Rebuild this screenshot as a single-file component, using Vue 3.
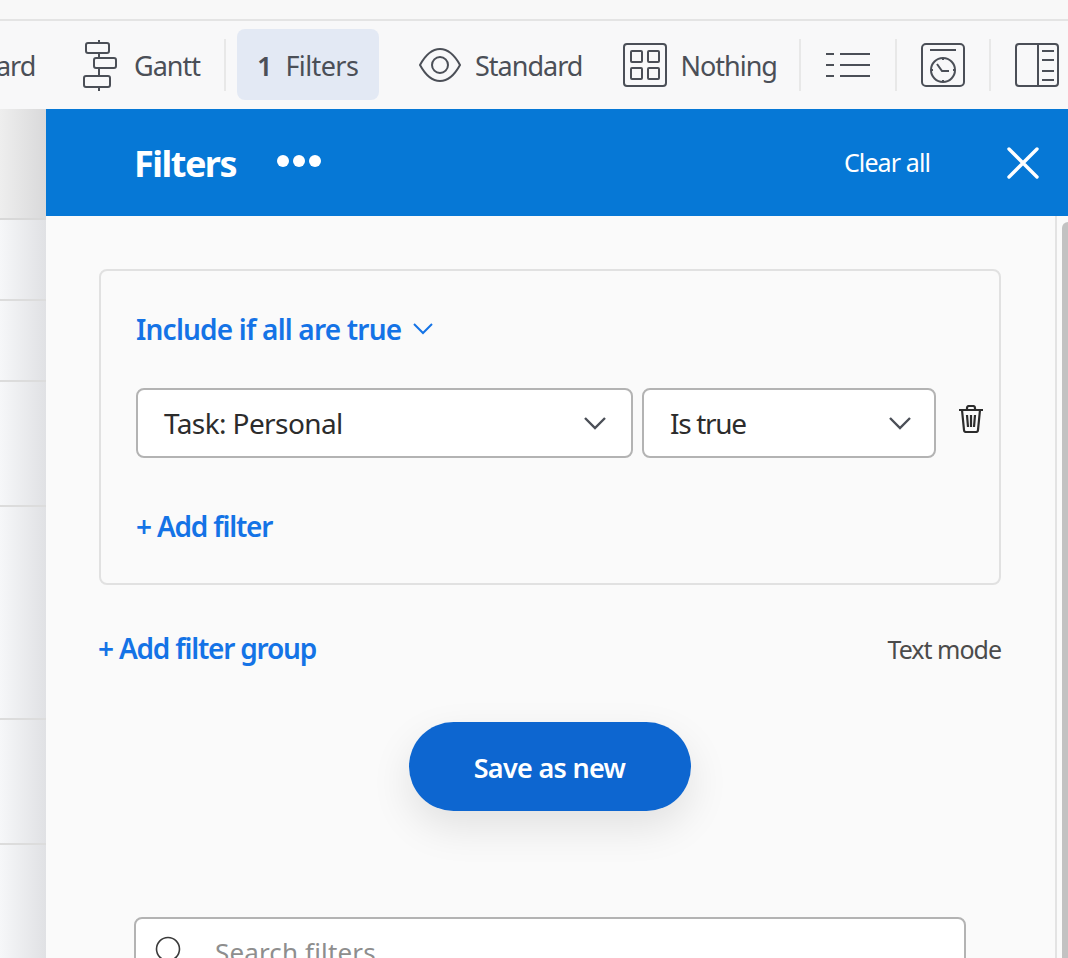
<template>
  <div class="page">
    <div class="top-strip"></div>
    <div class="toolbar">
      <span class="tool-text board">Board</span>
      <div class="tool gantt">
        <svg width="34" height="52" viewBox="0 0 34 52" fill="none" stroke="#4b4f57" stroke-width="2">
          <path d="M16 1v3M16 14v5M16 29v8M16 48v4" />
          <rect x="3" y="4" width="23" height="10" rx="2" />
          <rect x="11" y="19" width="22" height="10" rx="2" />
          <rect x="1" y="37" width="26" height="11" rx="2" />
        </svg>
        <span class="tool-text gantt-label">Gantt</span>
      </div>
      <i class="sep first-sep"></i>
      <div class="tool filters-tool">
        <b>1</b>
        <span class="tool-text filters-label">Filters</span>
      </div>
      <div class="tool standard">
        <svg width="42" height="34" viewBox="0 0 42 34" fill="none" stroke="#4b4f57" stroke-width="2">
          <path d="M1 17C7 6 14 1 21 1s14 5 20 16c-6 11-13 16-20 16S7 28 1 17z" />
          <circle cx="21" cy="17" r="8" />
        </svg>
        <span class="tool-text">Standard</span>
      </div>
      <div class="tool nothing">
        <svg width="44" height="44" viewBox="0 0 44 44" fill="none" stroke="#4b4f57" stroke-width="2">
          <rect x="1" y="1" width="42" height="42" rx="3" />
          <rect x="8" y="8" width="11" height="11" rx="1" />
          <rect x="25" y="8" width="11" height="11" rx="1" />
          <rect x="8" y="25" width="11" height="11" rx="1" />
          <rect x="25" y="25" width="11" height="11" rx="1" />
        </svg>
        <span class="tool-text">Nothing</span>
      </div>
      <i class="sep list-sep"></i>
      <svg class="list-icon" width="44" height="26" viewBox="0 0 44 26" fill="none" stroke="#4b4f57" stroke-width="2">
        <path d="M0 2h8M14 2h30M0 13h8M14 13h30M0 24h8M14 24h30" />
      </svg>
      <i class="sep clock-sep"></i>
      <svg class="clock-icon" width="44" height="44" viewBox="0 0 44 44" fill="none" stroke="#4b4f57" stroke-width="2">
        <rect x="1" y="1" width="42" height="42" rx="4" />
        <path d="M9 7h26" />
        <circle cx="22" cy="27" r="12" />
        <path d="M22 15v2M22 37v2M10 27h2M32 27h2M16 21l5 7h7" />
      </svg>
      <i class="sep panel-sep"></i>
      <svg class="panel-icon" width="44" height="44" viewBox="0 0 44 44" fill="none" stroke="#4b4f57" stroke-width="2">
        <rect x="1" y="1" width="42" height="42" rx="3" />
        <path d="M23 1v42M27 8h12M27 17h12M27 28h12M27 37h12" />
      </svg>
    </div>
    <div class="content">
      <div class="side">
        <div class="side-head"></div>
        <div class="side-row" style="height: 81px"></div>
        <div class="side-row" style="height: 81px"></div>
        <div class="side-row" style="height: 125px"></div>
        <div class="side-row" style="height: 213px"></div>
        <div class="side-row" style="height: 125px"></div>
      </div>
      <div class="panel">
        <header class="panel-head">
          <h1>Filters</h1>
          <div class="dots"><i></i><i></i><i></i></div>
          <a class="clear">Clear all</a>
          <svg width="32" height="32" viewBox="0 0 32 32" stroke="#fff" stroke-width="3.4" stroke-linecap="round">
            <path d="M2 2l28 28M30 2L2 30" />
          </svg>
        </header>
        <div class="panel-body">
          <section class="group">
            <div class="group-title">
              <span>Include if all are true</span>
              <svg width="20" height="12" viewBox="0 0 20 12" fill="none" stroke="#1473e6" stroke-width="2">
                <path d="M1 1l9 9 9-9" />
              </svg>
            </div>
            <div class="row">
              <div class="select field-select">
                <span>Task: Personal</span>
                <svg width="24" height="14" viewBox="0 0 24 14" fill="none" stroke="#4b4f57" stroke-width="2.4">
                  <path d="M2 2l10 10L22 2" />
                </svg>
              </div>
              <div class="select op-select">
                <span>Is true</span>
                <svg width="24" height="14" viewBox="0 0 24 14" fill="none" stroke="#4b4f57" stroke-width="2.4">
                  <path d="M2 2l10 10L22 2" />
                </svg>
              </div>
              <svg class="trash" width="26" height="28" viewBox="0 0 26 28" fill="none" stroke="#2c2c2c" stroke-width="2.2">
                <path d="M1 5h24M9 5V3a2 2 0 0 1 2-2h4a2 2 0 0 1 2 2v2" />
                <path d="M4 5l2 20a2 2 0 0 0 2 2h10a2 2 0 0 0 2-2l2-20" />
                <path d="M9 10l1 12M13 10v12M17 10l-1 12" />
              </svg>
            </div>
            <a class="add add-filter">+ Add filter</a>
          </section>
          <div class="below">
            <a class="add add-group">+ Add filter group</a>
            <span class="text-mode">Text mode</span>
          </div>
          <div class="save-wrap">
            <button class="save">Save as new</button>
          </div>
          <div class="search">
            <svg width="32" height="32" viewBox="0 0 32 32" fill="none" stroke="#3a3a3a" stroke-width="1.6">
              <circle cx="13" cy="13" r="11.5" />
              <path d="M21 22l8 8" />
            </svg>
            <span>Search filters</span>
          </div>
        </div>
        <div class="scrollbar"></div>
      </div>
    </div>
  </div>
</template>

<script setup>
</script>

<style>
html,
body {
  margin: 0;
  overflow: hidden;
}
</style>

<style scoped>
.page {
  width: 1068px;
  height: 958px;
  overflow: hidden;
  background: #f8f8f8;
  font-family: "Noto Sans", "Open Sans", sans-serif;
}

.top-strip {
  height: 19px;
  background: #f8f8f8;
  border-bottom: 2px solid #e4e4e4;
}

.toolbar {
  height: 88px;
  display: flex;
  align-items: center;
  background: #f8f8f9;
  white-space: nowrap;
  overflow: hidden;
}

.tool {
  display: flex;
  align-items: center;
  flex-shrink: 0;
}

.tool-text {
  font-size: 27px;
  color: #4b4f57;
  letter-spacing: -1px;
  flex-shrink: 0;
}

.board {
  margin-left: -36px;
  width: 71px;
}

.gantt {
  margin-left: 48px;
  gap: 17px;
}

.gantt-label {
  width: 66px;
}

.sep {
  display: block;
  width: 2px;
  height: 52px;
  background: #e8e8e8;
  flex-shrink: 0;
}

.first-sep {
  margin-left: 24px;
}

.filters-tool {
  margin: 0 0 1px 11px;
  width: 142px;
  height: 71px;
  box-sizing: border-box;
  padding: 1px 0 0 20px;
  gap: 13px;
  background: #e3e9f4;
  border-radius: 8px;
}

.filters-tool b {
  font-size: 27px;
  font-weight: 600;
  color: #4b4f57;
}

.filters-label {
  letter-spacing: -0.6px;
}

.standard {
  margin-left: 40px;
  gap: 14px;
}

.nothing {
  margin-left: 41px;
  gap: 13px;
}

.list-sep {
  margin-left: 22px;
}

.list-icon {
  margin-left: 25px;
  flex-shrink: 0;
}

.clock-sep {
  margin-left: 25px;
}

.clock-icon {
  margin-left: 24px;
  flex-shrink: 0;
}

.panel-sep {
  margin-left: 24px;
}

.panel-icon {
  margin-left: 24px;
  flex-shrink: 0;
}

.content {
  display: flex;
  height: 849px;
}

.side {
  width: 46px;
  flex-shrink: 0;
  background: linear-gradient(to right, #f6f7f9, #e0e1e4);
}

.side-head {
  height: 109px;
  border-bottom: 2px solid #d8d8d8;
  background: linear-gradient(to right, #eeeeee, #d9d9da);
}

.side-row {
  box-sizing: border-box;
  border-bottom: 2px solid #dcdcdc;
}

.panel {
  position: relative;
  flex: 1;
  min-width: 0;
  display: flex;
  flex-direction: column;
  background: #fafafa;
}

.panel-head {
  height: 107px;
  flex-shrink: 0;
  display: flex;
  align-items: center;
  padding: 0 29px 0 88px;
  background: #0678d6;
  color: #fff;
}

.panel-head h1 {
  margin: 2px 0 0;
  font-size: 36px;
  font-weight: 700;
  letter-spacing: -1.5px;
}

.dots {
  display: flex;
  gap: 4px;
  margin-left: 41px;
  margin-bottom: 4px;
}

.dots i {
  width: 12px;
  height: 12px;
  border-radius: 50%;
  background: #fff;
}

.clear {
  margin: 0 77px 2px auto;
  font-size: 25px;
  letter-spacing: -0.9px;
}

.panel-body {
  flex: 1;
  padding: 53px 54px 0 53px;
  border-right: 2px solid #e3e3e3;
  margin-right: 11px;
}

.group {
  box-sizing: border-box;
  height: 316px;
  padding: 42px 0 0 35px;
  border: 2px solid #e1e1e1;
  border-radius: 8px;
}

.group-title {
  display: flex;
  align-items: center;
  gap: 12px;
  color: #1473e6;
  font-size: 28px;
  font-weight: 600;
  letter-spacing: -0.8px;
  line-height: 32px;
}

.row {
  display: flex;
  align-items: flex-start;
  margin-top: 43px;
}

.select {
  box-sizing: border-box;
  height: 70px;
  display: flex;
  align-items: center;
  justify-content: space-between;
  background: #fff;
  border: 2px solid #b3b3b3;
  border-radius: 8px;
  font-size: 28px;
  letter-spacing: -0.6px;
  color: #2c2c2c;
}

.field-select {
  width: 497px;
  padding: 0 24px 0 26px;
}

.op-select {
  width: 294px;
  margin-left: 9px;
  padding: 0 22px 0 26px;
  letter-spacing: -1.3px;
}

.trash {
  margin: 17px 0 0 22px;
  flex-shrink: 0;
}

.add {
  color: #1473e6;
  font-size: 28px;
  font-weight: 600;
  letter-spacing: -1.2px;
  line-height: 38px;
}

.add-filter {
  display: block;
  margin-top: 49px;
}

.add-group {
  margin: 0 0 2px -1px;
}

.below {
  display: flex;
  align-items: center;
  justify-content: space-between;
  margin-top: 44px;
}

.text-mode {
  font-size: 25px;
  letter-spacing: -1px;
  color: #4b4b4b;
}

.save-wrap {
  display: flex;
  justify-content: center;
  margin-top: 53px;
}

.save {
  width: 282px;
  height: 89px;
  padding: 2px 1px 0 0;
  border: none;
  border-radius: 45px;
  background: #0d66d0;
  color: #fff;
  font: 600 27px "Noto Sans", sans-serif;
  letter-spacing: -0.7px;
  box-shadow: 0 16px 40px rgba(0, 0, 0, 0.1);
}

.search {
  box-sizing: border-box;
  height: 70px;
  margin: 106px 35px 0;
  display: flex;
  align-items: center;
  padding-left: 19px;
  gap: 28px;
  background: #fff;
  border: 2px solid #b3b3b3;
  border-radius: 8px;
  font-size: 26px;
  letter-spacing: 0.15px;
  color: #8e8e8e;
}

.scrollbar {
  position: absolute;
  top: 113px;
  right: 0;
  width: 6px;
  bottom: 0;
  border-radius: 6px 0 0 0;
  background: #c2c2c2;
}
</style>
